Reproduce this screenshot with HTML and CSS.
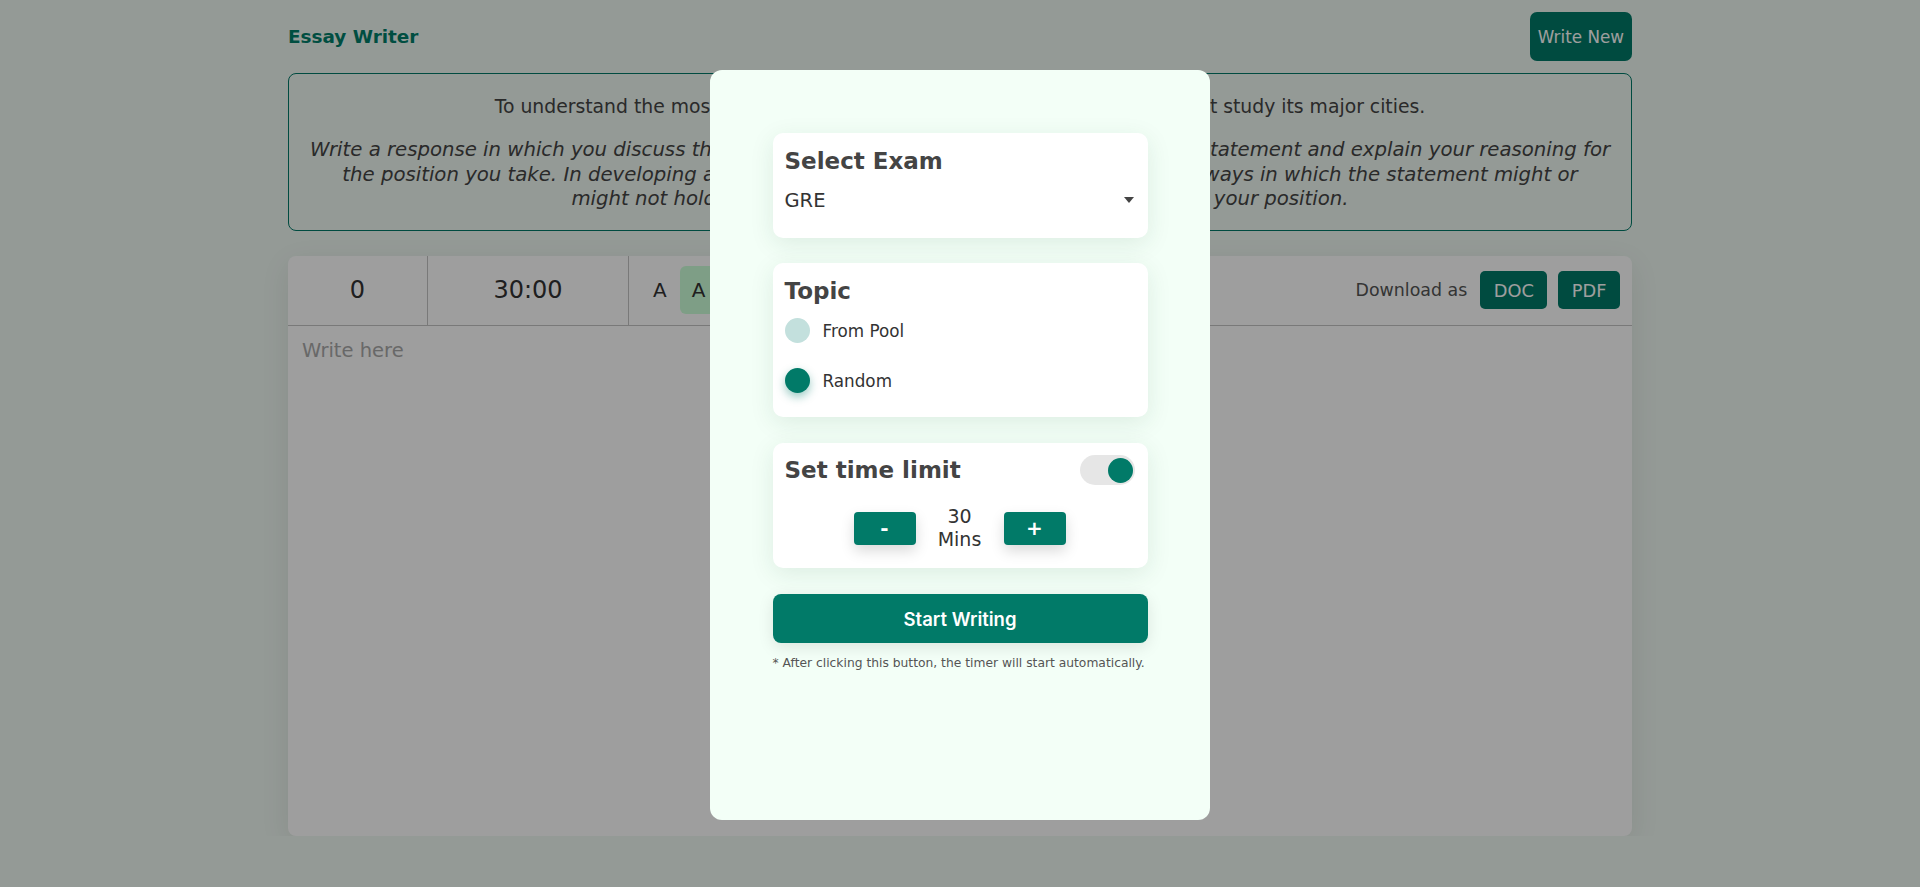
FILE: index.html
```html
<!DOCTYPE html>
<html lang="en">
<head>
<meta charset="utf-8">
<title>Essay Writer</title>
<link rel="stylesheet" href="styles.css">
</head>
<body>
<div class="page">
  <header class="header">
    <h1 class="brand">Essay Writer</h1>
    <button class="btn write-new">Write New</button>
  </header>
  <section class="prompt">
    <p class="statement">To understand the most important characteristics of a society, one must first study its major cities.</p>
    <p class="task">Write a response in which you discuss the extent to which you agree or disagree with the statement and explain your reasoning for<br>the position you take. In developing and supporting your position, you should consider ways in which the statement might or<br>might not hold true and explain how these considerations shape your position.</p>
  </section>
  <section class="editor">
    <div class="toolbar">
      <div class="cell cell-count">0</div>
      <div class="cell cell-timer">30:00</div>
      <div class="sizes">
        <span class="size">A</span>
        <span class="size active">A</span>
        <span class="size size-lg">A</span>
      </div>
      <div class="download">
        <span class="dl-label">Download as</span>
        <button class="btn dl-btn">DOC</button>
        <button class="btn dl-btn">PDF</button>
      </div>
    </div>
    <textarea class="write-area" placeholder="Write here"></textarea>
  </section>
</div>

<div class="overlay">
  <div class="modal">
    <div class="modal-inner">
      <div class="card exam-card">
        <h2 class="card-title">Select Exam</h2>
        <div class="select"><span>GRE</span><span class="caret"></span></div>
      </div>
      <div class="card topic-card">
        <h2 class="card-title">Topic</h2>
        <div class="options">
          <div class="option"><span class="radio"></span><span>From Pool</span></div>
          <div class="option"><span class="radio checked"></span><span>Random</span></div>
        </div>
      </div>
      <div class="card time-card">
        <div class="time-head">
          <h2 class="card-title">Set time limit</h2>
          <span class="toggle"><span class="knob"></span></span>
        </div>
        <div class="stepper">
          <button class="btn step">-</button>
          <div class="value">30<br>Mins</div>
          <button class="btn step">+</button>
        </div>
      </div>
      <button class="btn start">Start Writing</button>
      <p class="note">* After clicking this button, the timer will start automatically.</p>
    </div>
  </div>
</div>
</body>
</html>
```
FILE: styles.css
```css
* { box-sizing: border-box; }
body {
  margin: 0;
  background: #eff8f2;
  font-family: "DejaVu Sans", "Liberation Sans", sans-serif;
  color: #444;
}
.page { width: 70%; margin: 0 auto; padding-top: 12px; }
.header { display: flex; justify-content: space-between; align-items: center; }
.brand { margin: 0; font-size: 18.4px; font-weight: 700; color: #017e6a; }
.btn {
  background: #017a68;
  color: #fff;
  border: none;
  font-family: inherit;
  cursor: pointer;
}
.write-new { height: 49px; padding: 0 8px; font-size: 16.8px; border-radius: 7px; }

.prompt {
  margin-top: 12px;
  border: 1px solid #017a68;
  border-radius: 8px;
  padding: 21px 16px 18px;
  text-align: center;
  font-size: 18.8px;
  line-height: 24px;
  color: #444;
}
.prompt p { margin: 0; white-space: nowrap; }
.prompt .task { margin-top: 19px; font-style: italic; font-size: 19.7px; line-height: 24.5px; }

.editor {
  margin-top: 25px;
  height: 580px;
  background: #fff;
  border-radius: 8px;
  box-shadow: 0 8px 30px rgba(0, 0, 0, 0.08);
  display: flex;
  flex-direction: column;
  overflow: hidden;
}
.toolbar { height: 70px; border-bottom: 1px solid #c4c4c4; display: flex; }
.cell {
  display: flex;
  align-items: center;
  justify-content: center;
  border-right: 1px solid #c4c4c4;
  font-size: 24px;
  color: #333;
}
.cell-count { width: 140px; }
.cell-timer { width: 201px; }
.sizes { display: flex; align-items: center; gap: 1px; padding-left: 12px; }
.size {
  height: 48px;
  padding: 0 12px;
  display: flex;
  align-items: center;
  border-radius: 6px;
  font-size: 20px;
  color: #333;
}
.size.active { background: #cbffd8; }
.size-lg { font-size: 24px; }
.download {
  margin-left: auto;
  display: flex;
  align-items: center;
  gap: 11px;
  padding-right: 12px;
  font-size: 17.4px;
  color: #555;
}
.dl-label { margin-right: 2px; }
.dl-btn { height: 38px; padding: 0 13.5px; border-radius: 5px; font-size: 17.8px; }
.write-area {
  flex: 1;
  border: none;
  outline: none;
  resize: none;
  background: transparent;
  padding: 13px 14px;
  font-family: inherit;
  font-size: 19.5px;
  line-height: 24px;
  color: #333;
}
.write-area::placeholder { color: #a9a9a9; }

.overlay {
  position: fixed;
  inset: 0;
  background: rgba(0, 0, 0, 0.38);
  display: flex;
  justify-content: center;
  align-items: flex-start;
  padding-top: 70px;
}
.modal {
  width: 500px;
  height: 750px;
  background: #f3fff7;
  border-radius: 12px;
  padding-top: 63px;
  display: flex;
  justify-content: center;
  align-items: flex-start;
}
.modal-inner { width: 375px; display: flex; flex-direction: column; }
.card {
  background: #fff;
  border-radius: 10px;
  box-shadow: 0 6px 24px rgba(30, 80, 50, 0.10);
  padding: 14px 13px 0 12px;
}
.card-title { margin: 0; font-size: 23px; font-weight: 700; line-height: 28px; color: #444; }
.exam-card { padding-bottom: 23px; }
.select {
  margin-top: 10px;
  height: 30px;
  display: flex;
  align-items: center;
  justify-content: space-between;
  font-size: 19.5px;
  color: #333;
}
.caret {
  width: 0;
  height: 0;
  margin-right: 1px;
  border-left: 5px solid transparent;
  border-right: 5px solid transparent;
  border-top: 6px solid #444;
}
.topic-card { margin-top: 25px; padding-bottom: 24px; }
.options { margin-top: 13px; display: flex; flex-direction: column; gap: 25px; }
.option { display: flex; align-items: center; gap: 13px; height: 25px; font-size: 16.8px; color: #333; }
.radio { width: 25px; height: 25px; border-radius: 50%; background: #c3e0dd; flex: none; }
.radio.checked { background: #017a68; box-shadow: 0 4px 10px rgba(1, 122, 104, 0.4); }
.time-card { margin-top: 26px; padding-top: 12px; padding-bottom: 17px; }
.time-head { display: flex; justify-content: space-between; align-items: center; height: 30px; }
.toggle {
  width: 55px;
  height: 30px;
  border-radius: 15px;
  background: #e6e6e6;
  display: flex;
  align-items: center;
  justify-content: flex-end;
  padding-right: 2px;
}
.knob { width: 25px; height: 25px; border-radius: 50%; background: #017a68; }
.stepper { margin-top: 20px; display: flex; justify-content: center; align-items: center; gap: 20px; }
.step {
  width: 62px;
  height: 33px;
  border-radius: 4px;
  font-size: 20px;
  font-weight: 700;
  box-shadow: 0 6px 14px rgba(0, 0, 0, 0.15);
}
.value { width: 48px; text-align: center; font-size: 19px; line-height: 23px; color: #333; }
.start {
  margin-top: 26px;
  height: 49px;
  border-radius: 8px;
  font-family: "Inter", "DejaVu Sans", sans-serif;
  font-size: 18.5px;
  font-weight: 600;
  box-shadow: 0 4px 16px rgba(0, 0, 0, 0.1);
}
.note { margin: 12px 0 0; font-size: 12.3px; line-height: 16px; color: #555; }
```
